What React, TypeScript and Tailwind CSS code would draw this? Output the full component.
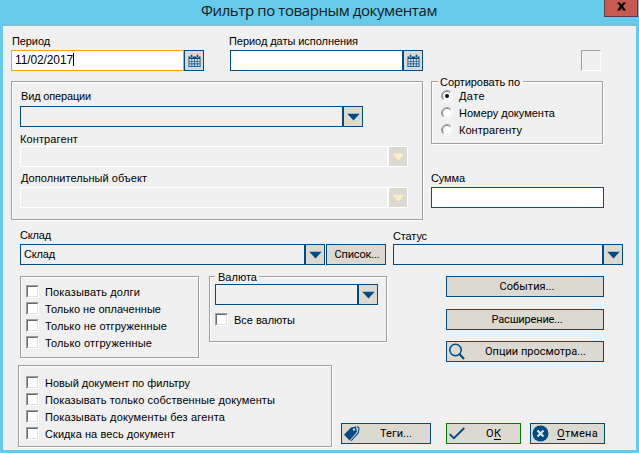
import { useLayoutEffect, useRef, type ReactNode } from "react";

/** Text set to an exact width by distributing the difference between its letters. */
function Fit({ w, children, className = "" }: { w: number; children: string; className?: string }) {
  const ref = useRef<HTMLSpanElement>(null);
  useLayoutEffect(() => {
    const el = ref.current;
    if (!el) return;
    el.style.letterSpacing = "0px";
    const natural = el.getBoundingClientRect().width;
    el.style.letterSpacing = `${(w - natural) / children.length}px`;
  }, [w, children]);
  return (
    <span ref={ref} className={`inline-block whitespace-nowrap ${className}`}>
      {children}
    </span>
  );
}

function Label({ w, children, className = "" }: { w: number; children: string; className?: string }) {
  return (
    <div className={`flex h-3 text-[11px] leading-3 ${className}`}>
      <Fit w={w}>{children}</Fit>
    </div>
  );
}

function Triangle({ disabled = false }: { disabled?: boolean }) {
  return (
    <svg width="13" height="8" viewBox="0 0 13 8" className={disabled ? "text-[#ffecc8]" : "text-[#004b85]"}>
      <path d="M0.3 0.8h12.4L6.5 7.4z" fill="currentColor" />
    </svg>
  );
}

function Combo({ className, disabled = false, children }: { className: string; disabled?: boolean; children?: ReactNode }) {
  const line = disabled ? "border-white" : "border-[#004b85]";
  return (
    <div className={`flex h-[21px] shrink-0 border ${line} ${className}`}>
      <div className="flex flex-1 pt-[3px] pl-[3px]">{children}</div>
      <div className={`flex w-5 items-center justify-center border-l-2 bg-[#dcd9d0] ${line}`}>
        <Triangle disabled={disabled} />
      </div>
    </div>
  );
}

function Calendar() {
  return (
    <svg width="13" height="14" viewBox="0 0 13 14">
      <path d="M0.5 2.5h12v10.5h-12z" fill="#004b85" />
      <path d="M2.5 0.5h2v3h-2zM8.5 0.5h2v3h-2z" fill="#004b85" stroke="#dcd9d0" strokeWidth="0.5" />
      <path
        d="M1.3 5h2.2v2h-2.2zM4.2 5h2v2h-2zM6.9 5h2v2h-2zM9.6 5h2.1v2h-2.1zM1.3 7.6h2.2v2h-2.2zM4.2 7.6h2v2h-2zM6.9 7.6h2v2h-2zM9.6 7.6h2.1v2h-2.1zM1.3 10.2h2.2v2h-2.2zM4.2 10.2h2v2h-2zM6.9 10.2h2v2h-2zM9.6 10.2h2.1v2h-2.1z"
        fill="#d6dad8"
      />
    </svg>
  );
}

function CalendarButton() {
  return (
    <div className="flex h-[21px] w-5 items-center justify-center border border-[#004b85] bg-[#dcd9d0]">
      <Calendar />
    </div>
  );
}

function Etched({ className, children }: { className: string; children?: ReactNode }) {
  return (
    <div className={`shrink-0 border border-[#a0a0a0] shadow-[inset_1px_1px_0_white,1px_1px_0_white] ${className}`}>
      {children}
    </div>
  );
}

function Check({ w, children }: { w: number; children: string }) {
  return (
    <div className="flex h-[17px] items-start">
      <div className="h-[13px] w-[13px] border border-t-[#a0a0a0] border-r-white border-b-white border-l-[#a0a0a0]">
        <div className="h-[11px] w-[11px] border border-t-[#696969] border-r-[#e3e3e3] border-b-[#e3e3e3] border-l-[#696969] bg-white" />
      </div>
      <Label w={w} className="mt-px ml-1.5">{children}</Label>
    </div>
  );
}

function Radio({ w, checked = false, children }: { w: number; checked?: boolean; children: string }) {
  return (
    <div className="flex h-[17px] items-start">
      <svg width="12" height="12" viewBox="0 0 12 12">
        <circle cx="6" cy="6" r="5" fill="#fff" />
        <path d="M2.1 9.9A5.5 5.5 0 0 1 9.9 2.1" fill="none" stroke="#a0a0a0" />
        <path d="M2.8 9.2A4.5 4.5 0 0 1 9.2 2.8" fill="none" stroke="#696969" strokeWidth="0.8" />
        <path d="M9.9 2.1A5.5 5.5 0 0 1 2.1 9.9" fill="none" stroke="#fff" />
        <path d="M9.2 2.8A4.5 4.5 0 0 1 2.8 9.2" fill="none" stroke="#e3e3e3" strokeWidth="0.8" />
        {checked && <circle cx="6" cy="6" r="2" fill="#000" />}
      </svg>
      <Label w={w} className="ml-1.5">{children}</Label>
    </div>
  );
}

function Button({ className, border = "border-[#004b85]", children }: { className: string; border?: string; children: ReactNode }) {
  return (
    <div className={`flex h-[21px] shrink-0 items-center border bg-[#dcd9d0] font-[Roboto,sans-serif] text-[11px] leading-[14px] ${border} ${className}`}>
      {children}
    </div>
  );
}

export default function App() {
  return (
    <div className="flex h-[453px] w-[639px] flex-col overflow-hidden bg-[#66caea] font-['Liberation_Sans',Arial,sans-serif] text-black">
      <header className="flex h-[25px] shrink-0 items-start">
        <div className="pl-[201px] font-['Open_Sans',sans-serif] text-[15px] leading-5 text-[#101c22]">
          <Fit w={236}>Фильтр по товарным документам</Fit>
        </div>
        <div className="mr-px ml-auto flex h-[17px] w-[34px] items-center justify-center border border-t-0 border-[#5d3b40] bg-[#c75950]">
          <svg width="9" height="9" viewBox="0 0 9 9" className="-mt-1">
            <path d="M0 0.5h3l1.5 2.2L6 0.5h3L6 4.3l3 4.2H6L4.5 6 3 8.5H0l3-4.2z" fill="#000" />
          </svg>
        </div>
      </header>

      <main className="mx-[3px] mb-[3px] flex flex-1 flex-col border-t border-[#8fb4c2] bg-[#f0f0f0]">
        {/* Period fields */}
        <section className="flex h-[55px] shrink-0 items-start pt-[9px] pl-2">
          <div className="w-[218px]">
            <Label w={38} className="pl-px">Период</Label>
            <div className="mt-[3px] flex">
              <div className="flex h-[21px] w-[173px] border border-[#ffa500] bg-white pt-[2px] pl-[3px] text-[12px] leading-[14px]">
                <Fit w={58}>11/02/2017</Fit>
                <div className="h-[13px] w-px bg-black" />
              </div>
              <CalendarButton />
            </div>
          </div>
          <div className="w-[352px]">
            <Label w={129}>Период даты исполнения</Label>
            <div className="mt-[3px] ml-px flex">
              <div className="h-[21px] w-[173px] border border-[#004b85] bg-white" />
              <CalendarButton />
            </div>
          </div>
          <div className="mt-[15px] h-[21px] w-5 border border-t-[#a0a0a0] border-r-white border-b-white border-l-[#a0a0a0]" />
        </section>

        {/* Operation panel and sorting */}
        <section className="flex shrink-0 items-start gap-2 pl-2">
          <Etched className="h-[139px] w-[412px] pt-2 pl-2">
            <Label w={70} className="pl-px">Вид операции</Label>
            <Combo className="mt-[4px] w-[343px]" />
            <Label w={58} className="mt-[6px]">Контрагент</Label>
            <Combo disabled className="mt-px w-[388px]" />
            <Label w={126} className="mt-[5px] pl-px">Дополнительный объект</Label>
            <Combo disabled className="mt-[3px] w-[388px]" />
          </Etched>
          <div className="w-[173px]">
            <Etched className="h-[63px] w-[172px] pl-[6px]">
              <div className="-mt-[6px] flex">
                <Label w={80} className="bg-[#f0f0f0] pr-[3px] pl-[2px]">Сортировать по</Label>
              </div>
              <div className="mt-[2px] pl-[3px]">
                <Radio w={26} checked>Дате</Radio>
                <Radio w={96}>Номеру документа</Radio>
                <Radio w={63}>Контрагенту</Radio>
              </div>
            </Etched>
            <Label w={34} className="mt-[28px]">Сумма</Label>
            <div className="mt-[3px] h-[21px] border border-[#1c4a75] bg-white" />
          </div>
        </section>

        {/* Warehouse and status */}
        <section className="flex h-[56px] shrink-0 items-start pt-[9px] pl-[17px]">
          <div className="w-[373px]">
            <Label w={31}>Склад</Label>
            <div className="mt-[3px] flex gap-px">
              <Combo className="w-[305px]">
                <Label w={31}>Склад</Label>
              </Combo>
              <Button className="w-[60px] justify-center">
                <Fit w={45} className="ml-0.5">Список...</Fit>
              </Button>
            </div>
          </div>
          <div>
            <Label w={34} className="mt-px">Статус</Label>
            <Combo className="mt-[2px] w-[230px]" />
          </div>
        </section>

        {/* Debt filters, currency and actions */}
        <section className="flex h-[89px] shrink-0 items-start pl-[17px]">
          <Etched className="h-[82px] w-[179px] pt-2 pl-[5px]">
            <Check w={95}>Показывать долги</Check>
            <Check w={116}>Только не оплаченные</Check>
            <Check w={122}>Только не отгруженные</Check>
            <Check w={107}>Только отгруженные</Check>
          </Etched>
          <Etched className="ml-[10px] h-[66px] w-[178px] pl-[5px]">
            <div className="-mt-[6px] flex">
              <Label w={39} className="bg-[#f0f0f0] pr-[2px] pl-[3px]">Валюта</Label>
            </div>
            <Combo className="mt-px w-[163px]" />
            <div className="mt-2">
              <Check w={61}>Все валюты</Check>
            </div>
          </Etched>
          <div className="ml-[59px] w-[158px]">
            <Button className="justify-center">
              <Fit w={55} className="ml-1">События...</Fit>
            </Button>
            <Button className="mt-3 justify-center">
              <Fit w={71} className="ml-1">Расширение...</Fit>
            </Button>
            <Button className="mt-[11px] pl-[2px]">
              <svg width="16" height="17" viewBox="0 0 16 17">
                <circle cx="6.5" cy="7" r="5.7" fill="none" stroke="#004b85" strokeWidth="1.5" />
                <path d="M10.5 11l4.5 5" stroke="#004b85" strokeWidth="2" />
              </svg>
              <Fit w={101} className="ml-[20px]">Опции просмотра...</Fit>
            </Button>
          </div>
        </section>

        {/* Document options and dialog buttons */}
        <section className="flex items-start pl-[15px]">
          <Etched className="h-[82px] w-[314px] pt-[10px] pl-[7px]">
            <Check w={145}>Новый документ по фильтру</Check>
            <Check w={230}>Показывать только собственные документы</Check>
            <Check w={180}>Показывать документы без агента</Check>
            <Check w={130}>Скидка на весь документ</Check>
          </Etched>
          <div className="mt-[58px] ml-[9px] flex">
            <Button className="w-[90px] pl-px">
              <svg width="17" height="17" viewBox="0 0 17 17">
                <path d="M1 9.7L8 2.4 13 1.5 14 6.8 6.7 15.5z" fill="#004b85" />
                <path d="M14 1.5l2 1.2-.6 5L8 16" fill="none" stroke="#004b85" strokeWidth="1.1" />
                <circle cx="11" cy="4.5" r="1.2" fill="#dcd9d0" />
              </svg>
              <Fit w={32} className="ml-[20px]">Теги...</Fit>
            </Button>
            <Button className="ml-[15px] w-[75px] pl-[2px]" border="border-[#008000]">
              <svg width="16" height="13" viewBox="0 0 16 13">
                <path d="M0.7 7.2l4.2 4L15.3 1" fill="none" stroke="#004b85" strokeWidth="1.8" />
              </svg>
              <span className="ml-[21px] flex">
                <Fit w={8}>О</Fit>
                <Fit w={7} className="underline underline-offset-2">К</Fit>
              </span>
            </Button>
            <Button className="ml-[9px] w-[75px] pl-px">
              <svg width="17" height="17" viewBox="0 0 17 17">
                <circle cx="8.5" cy="8.5" r="8" fill="#004b85" />
                <path d="M5.5 5.5l6 6m0-6l-6 6" stroke="#dce5e8" strokeWidth="2.2" />
              </svg>
              <span className="ml-2 flex">
                <Fit w={8} className="underline underline-offset-2">О</Fit>
                <Fit w={33}>тмена</Fit>
              </span>
            </Button>
          </div>
        </section>
      </main>
    </div>
  );
}
